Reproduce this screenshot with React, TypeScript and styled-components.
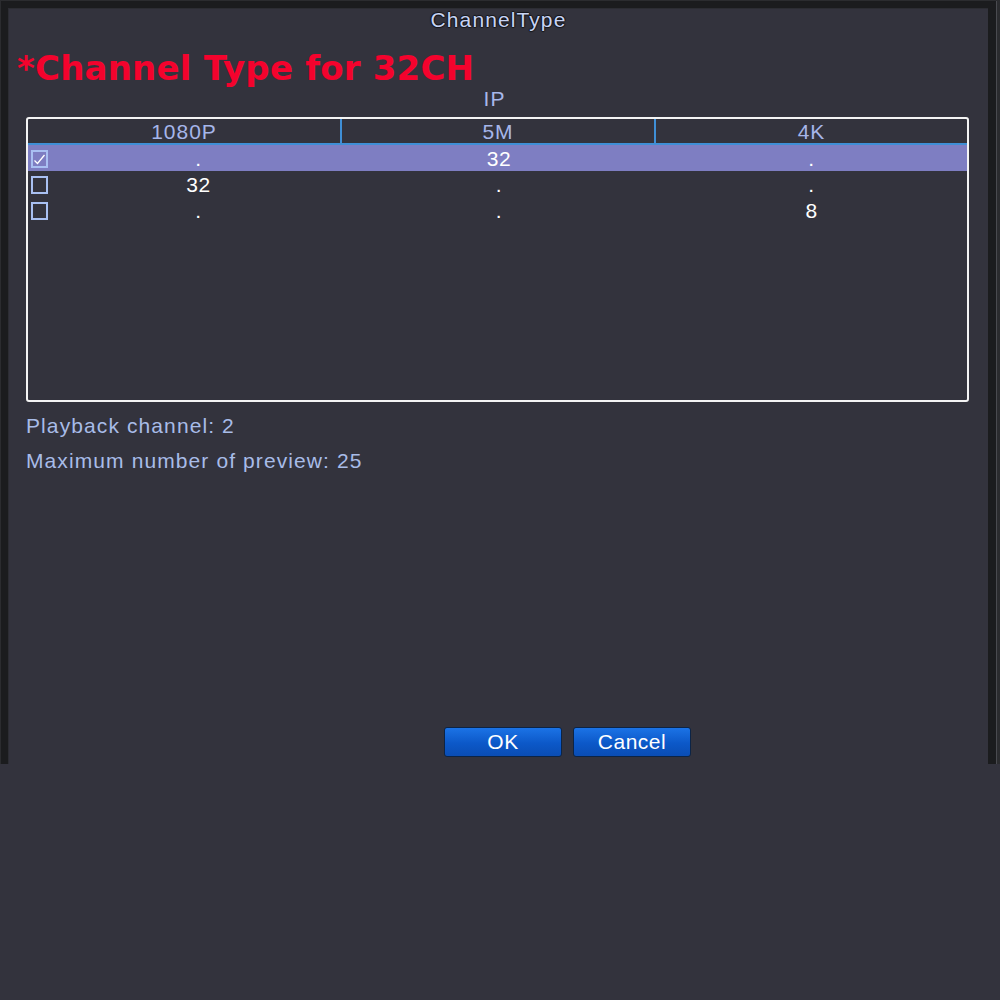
import React from "react";
import styled, { createGlobalStyle } from "styled-components";

const Global = createGlobalStyle`
  html, body { margin: 0; padding: 0; background: #33333d; }
  body { font-family: "Liberation Sans", Arial, sans-serif; }
  * { box-sizing: border-box; }
`;

const Page = styled.div`
  width: 1000px;
  height: 1000px;
  background: #33333d;
`;

const Frame = styled.div`
  width: 1000px;
  height: 764px;
  background: #2b2c2f;
  padding: 1px 3px 0 1px;
`;

const FrameDark = styled.div`
  height: 100%;
  background: #1b1c1e;
  padding: 7px 8px 0 7px;
  border-right: 1px solid #4a4b50;
`;

const Panel = styled.div`
  height: 100%;
  background: #33333d;
  border-left: 1px solid #2c2d33;
  border-top: 1px solid #2c2d33;
  padding: 0 19px 0 17px;
  display: flex;
  flex-direction: column;
`;

const Title = styled.div`
  text-align: center;
  font-size: 21px;
  letter-spacing: 1.1px;
  line-height: 22px;
  color: #c8d4f4;
  margin-left: -17px;
  margin-right: -19px;
  text-shadow: -1px 0 1px #15161a, 1px 0 1px #15161a, 0 1px 1px #15161a, 0 -1px 1px #15161a;
`;

const Banner = styled.div`
  font-family: "DejaVu Sans", Verdana, sans-serif;
  font-weight: 700;
  font-size: 34px;
  line-height: 40px;
  letter-spacing: 0.2px;
  color: #f4032d;
  margin-top: 17px;
  margin-left: -9px;
`;

const Group = styled.div`
  text-align: center;
  font-size: 21px;
  letter-spacing: 1px;
  line-height: 22px;
  color: #a8b8ea;
  margin-right: 6px;
`;

const TableBox = styled.div`
  margin-top: 7px;
  height: 285px;
  border: 2px solid #f4f4f4;
  border-radius: 3px;
  display: flex;
  flex-direction: column;
`;

const HeaderRow = styled.div`
  display: grid;
  grid-template-columns: 312px 314px 1fr;
  height: 26px;
  border-bottom: 2px solid #3f8fd6;
`;

const HeaderCell = styled.div<{ $divider?: boolean }>`
  text-align: center;
  font-size: 21px;
  letter-spacing: 1px;
  line-height: 25px;
  color: #a6b6ea;
  border-left: ${(p) => (p.$divider ? "2px solid #3f8fd6" : "none")};
`;

const Row = styled.div<{ $active?: boolean }>`
  display: grid;
  grid-template-columns: 27px 287px 314px 1fr;
  height: 26px;
  align-items: center;
  background: ${(p) => (p.$active ? "#7e7ec2" : "transparent")};
`;

const CheckCell = styled.div`
  display: flex;
  align-items: center;
  padding-left: 3px;
`;

const Box = styled.div`
  width: 17px;
  height: 18px;
  border: 2px solid #a9c0f2;
  display: flex;
  align-items: center;
  justify-content: center;
`;

const Cell = styled.div`
  text-align: center;
  color: #ffffff;
  font-size: 21px;
  letter-spacing: 0.5px;
  line-height: 26px;
  padding-top: 1px;
`;

const Info = styled.div<{ $top: number }>`
  font-size: 21px;
  letter-spacing: 1.1px;
  line-height: 24px;
  color: #a8bce8;
  margin-top: ${(p) => p.$top}px;
`;

const Buttons = styled.div`
  margin-top: auto;
  margin-bottom: 7px;
  display: flex;
  gap: 11px;
  padding-left: 418px;
`;

const Button = styled.button`
  width: 118px;
  height: 30px;
  border: 1px solid #0c2446;
  border-radius: 3px;
  background: linear-gradient(#1b73e6, #0c58c8 55%, #0a4db4);
  color: #ffffff;
  font-family: "Liberation Sans", Arial, sans-serif;
  font-size: 21px;
  letter-spacing: 0.5px;
  line-height: 26px;
  padding: 0;
`;

const Check = () => (
  <svg width="13" height="12" viewBox="0 0 13 12">
    <path d="M1.5 7.5 L4.5 10.5 L11.5 2" fill="none" stroke="#ffffff" strokeWidth="1.3" />
  </svg>
);

const rows = [
  { checked: true, v: [".", "32", "."] },
  { checked: false, v: ["32", ".", "."] },
  { checked: false, v: [".", ".", "8"] },
];

export default function App() {
  return (
    <Page>
      <Global />
      <Frame>
        <FrameDark>
          <Panel>
            <Title>ChannelType</Title>
            <Banner>*Channel Type for 32CH</Banner>
            <Group>IP</Group>
            <TableBox>
              <HeaderRow>
                <HeaderCell>1080P</HeaderCell>
                <HeaderCell $divider>5M</HeaderCell>
                <HeaderCell $divider>4K</HeaderCell>
              </HeaderRow>
              {rows.map((r, i) => (
                <Row key={i} $active={r.checked}>
                  <CheckCell>
                    <Box>{r.checked && <Check />}</Box>
                  </CheckCell>
                  {r.v.map((t, j) => (
                    <Cell key={j}>{t}</Cell>
                  ))}
                </Row>
              ))}
            </TableBox>
            <Info $top={12}>Playback channel: 2</Info>
            <Info $top={11}>Maximum number of preview: 25</Info>
            <Buttons>
              <Button>OK</Button>
              <Button>Cancel</Button>
            </Buttons>
          </Panel>
        </FrameDark>
      </Frame>
    </Page>
  );
}
